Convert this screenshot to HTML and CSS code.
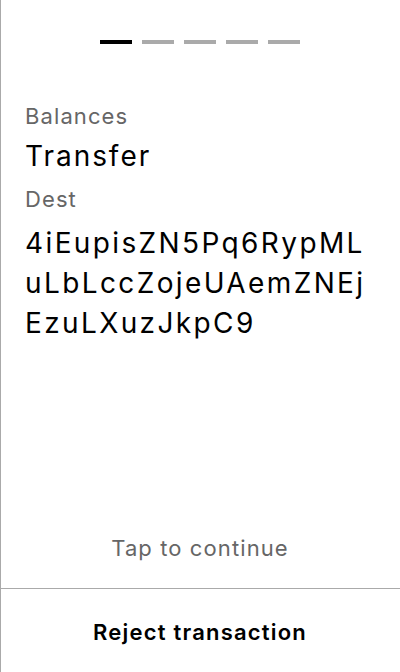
FILE: index.html
```html
<!DOCTYPE html>
<html>
<head>
<meta charset="utf-8">
<link rel="stylesheet" href="styles.css">
</head>
<body>
<div class="screen">
  <div class="steps">
    <span class="step active"></span>
    <span class="step"></span>
    <span class="step"></span>
    <span class="step"></span>
    <span class="step"></span>
  </div>
  <div class="content">
    <div class="label">Balances</div>
    <div class="value">Transfer</div>
    <div class="label">Dest</div>
    <div class="value address">4iEupisZN5Pq6RypMLuLbLccZojeUAemZNEjEzuLXuzJkpC9</div>
  </div>
  <div class="tap">Tap to continue</div>
  <div class="footer">
    <button class="reject">Reject transaction</button>
  </div>
</div>
</body>
</html>
```

FILE: styles.css
```css
html, body {
  margin: 0;
  padding: 0;
  background: #fff;
}
.screen {
  width: 400px;
  height: 672px;
  box-sizing: border-box;
  border-left: 1px solid #aaaaaa;
  display: flex;
  flex-direction: column;
  font-family: Inter, "Noto Sans", sans-serif;
  color: #000;
}
.steps {
  display: flex;
  justify-content: center;
  gap: 10px;
  padding-top: 40px;
  margin-left: -1px;
}
.step {
  width: 32px;
  height: 4px;
  background: #aaaaaa;
}
.step.active {
  background: #000;
}
.content {
  flex: 1;
  padding: 58px 20px 0 24px;
}
.label {
  font-size: 22px;
  line-height: 28px;
  letter-spacing: 0.05em;
  color: #666666;
}
.value {
  font-size: 28px;
  line-height: 40px;
  letter-spacing: 0.07em;
  margin: 6px 0 9px;
}
.address {
  width: 352px;
  word-break: break-all;
  letter-spacing: 0.085em;
  margin-top: 10px;
}
.tap {
  text-align: center;
  font-size: 22px;
  letter-spacing: 0.05em;
  color: #666666;
  line-height: 28px;
  padding-bottom: 26px;
  margin-left: -1px;
}
.footer {
  border-top: 1px solid #aaaaaa;
  margin-left: -1px;
  height: 84px;
  box-sizing: border-box;
  padding-top: 2px;
  display: flex;
  align-items: center;
  justify-content: center;
}
.reject {
  background: none;
  border: 0;
  padding: 0;
  font-family: Inter, "Noto Sans", sans-serif;
  font-size: 22px;
  letter-spacing: 0.055em;
  font-weight: 600;
  color: #000;
}
```
